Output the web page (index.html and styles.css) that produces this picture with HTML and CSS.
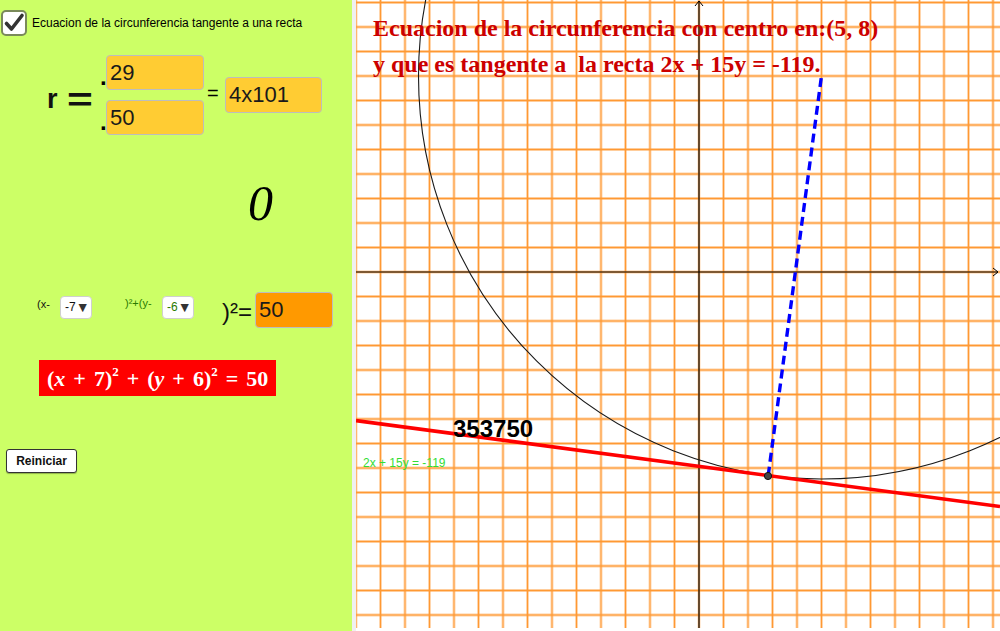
FILE: index.html
```html
<!DOCTYPE html>
<html>
<head>
<meta charset="utf-8">
<link rel="stylesheet" href="styles.css">
</head>
<body>
<div class="app">
  <div class="panel">
    <div class="row-check">
      <span class="checkbox">
        <svg width="26" height="26" viewBox="0 0 26 26">
          <rect x="1" y="1" width="24" height="24" rx="4" ry="4" fill="#fff" stroke="#7a8a5a" stroke-width="2"/>
          <path d="M5.5 13.5 L10.5 19 L21 5.5" fill="none" stroke="#333" stroke-width="3.6" stroke-linecap="round" stroke-linejoin="round"/>
        </svg>
      </span>
      <span class="check-label">Ecuacion de la circunferencia tangente a una recta</span>
    </div>

    <div class="row-frac">
      <span class="r-eq"><span class="r">r</span><span class="eq">=</span></span>
      <div class="frac">
        <div class="frac-item"><span class="dot">.</span><span class="field yellow">29</span></div>
        <div class="frac-item"><span class="dot">.</span><span class="field yellow">50</span></div>
      </div>
      <span class="eq-small">=</span>
      <span class="field yellow wide">4x101</span>
    </div>

    <div class="row-zero">0</div>

    <div class="row-eq">
      <span class="lbl-x">(x-</span>
      <span class="drop">-7<span class="tri">▼</span></span>
      <span class="lbl-y">)²+(y-</span>
      <span class="drop green">-6<span class="tri">▼</span></span>
      <span class="sq-eq">)²=</span>
      <span class="field orange">50</span>
    </div>

    <div class="row-formula">
      <div class="formula">(<i>x</i><span class="op">+</span>7)<sup>2</sup><span class="op">+</span>(<i>y</i><span class="op">+</span>6)<sup>2</sup><span class="op">=</span>50</div>
    </div>

    <div class="row-btn">
      <button class="btn">Reiniciar</button>
    </div>
  </div>
  <div class="sep"></div>
  <div class="graph">
    <svg class="plot" width="644" height="631" viewBox="0 0 644 631">
      <defs>
        <pattern id="grid" patternUnits="userSpaceOnUse" width="24.5" height="24.5" x="-12.25" y="-9.75">
          <path d="M12.25 0 V24.5 M0 12.25 H24.5" stroke="#ff9933" stroke-width="1.8" fill="none"/>
        </pattern>
      </defs>
      <rect x="0" y="0" width="644" height="628" fill="#fff"/>
      <rect x="0" y="0" width="644" height="628" fill="url(#grid)"/>
      <!-- axes -->
      <line x1="0" y1="272" x2="642" y2="272" stroke="#000" stroke-width="1.2"/>
      <path d="M637 268 L642 272 L637 276" fill="none" stroke="#000" stroke-width="1"/>
      <line x1="343" y1="1" x2="343" y2="628" stroke="#000" stroke-width="1.2"/>
      <path d="M339 6 L343 1 L347 6" fill="none" stroke="#000" stroke-width="1"/>
      <!-- circle -->
      <circle cx="465.5" cy="76" r="403" fill="none" stroke="#1a1a1a" stroke-width="1.1"/>
      <!-- tangent line -->
      <line x1="0" y1="420.6" x2="644" y2="506.5" stroke="#ff0000" stroke-width="3.6"/>
      <!-- radius -->
      <line x1="412.2" y1="475.6" x2="465.5" y2="76" stroke="#0000ff" stroke-width="3.4" stroke-dasharray="9 5"/>
      <circle cx="412" cy="476" r="3.6" fill="#444" stroke="#111" stroke-width="1"/>
    </svg>
    <div class="title">
      <div>Ecuacion de la circunferencia con centro en:(5, 8)</div>
      <div>y que es tangente a &nbsp;la recta 2x + 15y = -119.</div>
    </div>
    <div class="num">353750</div>
    <div class="line-label">2x + 15y = -119</div>
  </div>
</div>
</body>
</html>
```

FILE: styles.css
```css
html, body {
  margin: 0;
  padding: 0;
  background: #fff;
}
body {
  font-family: "Liberation Sans", Arial, sans-serif;
  width: 1000px;
  height: 631px;
  overflow: hidden;
}
.app {
  display: flex;
  width: 1000px;
  height: 631px;
}
.panel {
  width: 352px;
  height: 631px;
  background: #ccff66;
  display: flex;
  flex-direction: column;
  flex-shrink: 0;
}
.sep {
  width: 4px;
  background: #f0f0f0;
  flex-shrink: 0;
}
.graph {
  position: relative;
  width: 644px;
  height: 631px;
  background: #fff;
  overflow: hidden;
}
.plot {
  display: block;
}

/* row 1 */
.row-check {
  display: flex;
  align-items: center;
  margin-top: 10px;
  padding-left: 1px;
  height: 26px;
}
.checkbox {
  width: 26px;
  height: 26px;
  display: block;
}
.checkbox svg { display: block; }
.check-label {
  font-size: 12px;
  color: #000;
  margin-left: 5px;
}

/* row 2 */
.row-frac {
  display: flex;
  align-items: center;
  margin-top: 19px;
  height: 80px;
}
.r-eq {
  display: flex;
  align-items: center;
  margin-left: 47px;
  width: 54px;
  font-weight: bold;
  color: #111;
  margin-top: 8px;
}
.r {
  font-size: 27px;
}
.eq {
  font-size: 34px;
  margin-left: 12px;
  transform: scaleX(1.3);
  line-height: 1;
}
.frac {
  display: flex;
  flex-direction: column;
  gap: 10px;
}
.frac-item {
  display: flex;
  align-items: flex-end;
}
.dot {
  font-size: 24px;
  font-weight: bold;
  width: 6px;
  line-height: 16px;
  margin-bottom: 5px;
  margin-left: -1px;
}
.field {
  display: flex;
  align-items: center;
  box-sizing: border-box;
  height: 35px;
  width: 98px;
  border: 1px solid #bdbdbd;
  border-radius: 4px;
  font-size: 22px;
  color: #1a1a1a;
  padding-left: 3px;
}
.yellow { background: #ffcc33; }
.orange { background: #ff9900; height: 36px; width: 78px; }
.wide { width: 97px; height: 36px; }
.eq-small {
  font-size: 20px;
  margin-left: 3px;
  width: 18px;
  margin-top: -4px;
}

/* row 3 */
.row-zero {
  margin-top: 43px;
  padding-left: 248px;
  font-family: "Liberation Serif", "Times New Roman", serif;
  font-style: italic;
  font-size: 50px;
  line-height: 50px;
  height: 50px;
  color: #000;
}

/* row 4 */
.row-eq {
  display: flex;
  align-items: center;
  margin-top: 64px;
  height: 36px;
}
.lbl-x {
  font-size: 11px;
  margin-left: 37px;
  width: 23px;
  margin-top: -12px;
  color: #111;
}
.drop {
  box-sizing: border-box;
  width: 32px;
  height: 23px;
  background: #fff;
  border: 1px solid #cfcfcf;
  border-radius: 4px;
  font-size: 12px;
  display: flex;
  align-items: center;
  padding-left: 4px;
  color: #111;
  margin-top: -6px;
}
.drop.green { color: #2a7a00; }
.tri {
  color: #333;
  font-size: 14px;
  line-height: 1;
}
.lbl-y {
  font-size: 11px;
  color: #2a7a00;
  margin-left: 33px;
  width: 37px;
  margin-top: -14px;
}
.sq-eq {
  font-size: 24px;
  color: #111;
  margin-left: 28px;
  width: 33px;
  margin-top: 4px;
}

/* row 5 */
.row-formula {
  margin-top: 32px;
  padding-left: 39px;
}
.formula {
  display: inline-block;
  background: #ff0000;
  color: #fff;
  width: 237px;
  height: 36px;
  box-sizing: border-box;
  line-height: 38px;
  padding-left: 8px;
  font-family: "Liberation Serif", "Times New Roman", serif;
  font-weight: bold;
  font-size: 22px;
  white-space: nowrap;
}
.formula .op {
  margin: 0 8px;
}
.formula sup {
  font-size: 13px;
  line-height: 0;
  vertical-align: 10px;
}

/* row 6 */
.row-btn {
  margin-top: 53px;
  padding-left: 6px;
}
.btn {
  width: 71px;
  height: 24px;
  background: #fff;
  border: 1px solid #333;
  border-radius: 3px;
  font-family: "Liberation Sans", Arial, sans-serif;
  font-weight: bold;
  font-size: 12px;
  color: #111;
  padding: 0;
  box-shadow: 0 1px 1px rgba(0,0,0,0.3);
}

/* graph overlays */
.title {
  position: absolute;
  left: 17px;
  top: 10px;
  font-family: "Liberation Serif", "Times New Roman", serif;
  font-weight: bold;
  font-size: 24px;
  line-height: 36px;
  color: #cc0000;
  white-space: nowrap;
}
.num {
  position: absolute;
  left: 97px;
  top: 415px;
  font-family: "Liberation Sans", Arial, sans-serif;
  font-weight: bold;
  font-size: 24px;
  color: #000;
}
.line-label {
  position: absolute;
  left: 7px;
  top: 456px;
  font-size: 12px;
  color: #33dd33;
  font-family: "Liberation Sans", Arial, sans-serif;
}
```
